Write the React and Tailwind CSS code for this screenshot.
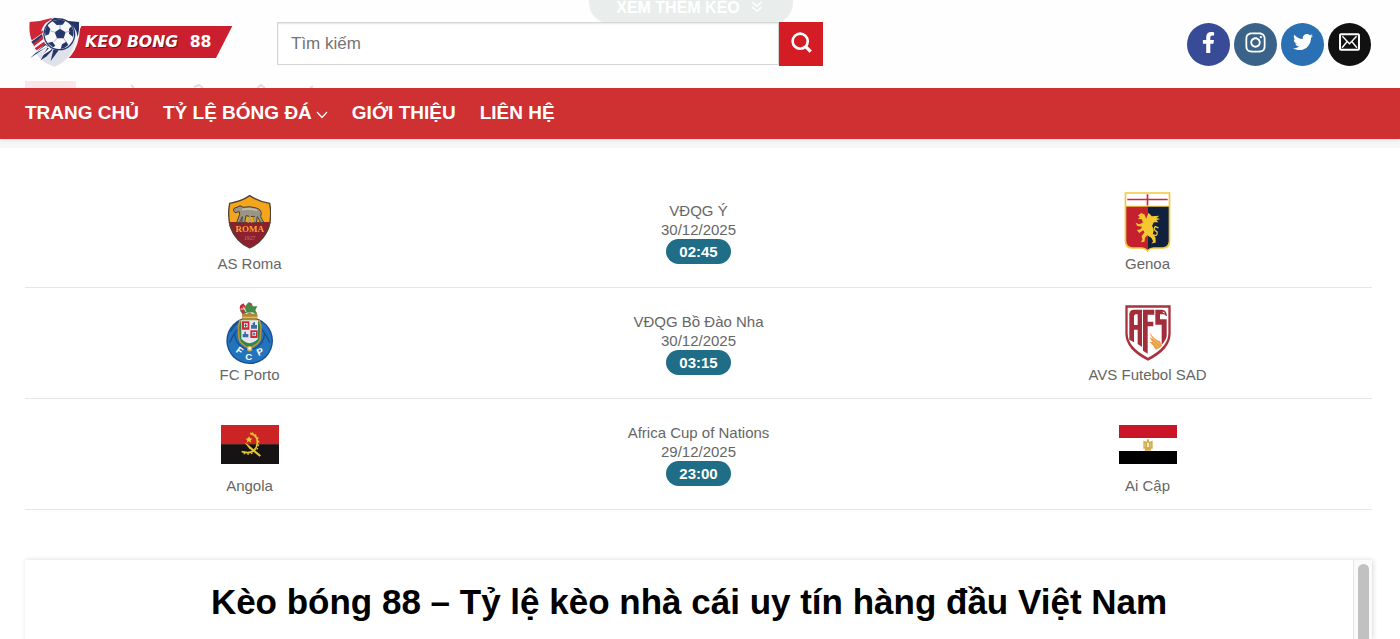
import React, { useState } from 'react';
import { FaFacebookF, FaInstagram, FaTwitter } from 'react-icons/fa';

const Logo = () => (
  <svg viewBox="84 54 615 150" className="w-[205px] h-[50px]" role="img" aria-label="KEO BONG 88">
    <path d="M244 81 H697 L648 177 H204 Z" fill="#cb1f30" />
    <path d="M88 68 Q125 66 160 54 Q196 66 238 68 Q245 112 223 155 Q204 188 163 203 Q120 188 104 158 Q84 116 88 68Z" fill="#f4f5f8" />
    <path d="M89 69 Q124 67 158 56 L150 64 Q126 76 124 100 L94 122 Q86 96 89 69Z" fill="#d02535" />
    <path d="M164 56 Q200 67 237 69 Q239 92 233 114 Q230 84 204 70 Q184 62 150 64Z" fill="#233466" />
    <path d="M163 203 Q122 190 108 163 L160 148 Q200 156 226 124 Q214 184 163 203Z" fill="#dfe2e8" />
    <path d="M94 116 L130 94 L128 102 L96 124Z M98 132 L128 112 L130 120 L102 142Z M104 148 L132 128 L136 136 L110 154Z" fill="#d02535" />
    <path d="M94 128 L126 105 L128 112 L98 134Z M90 178 L136 134 L144 142 L116 160Z M122 184 L142 146 L158 152 L140 172Z M152 186 L160 152 L176 154Z" fill="#26376b" />
    <path d="M102 164 L138 138 L142 143Z M124 172 L148 146 L154 152Z" fill="#fff" />
    <circle cx="178" cy="106" r="48" fill="#26376b" />
    <circle cx="178" cy="106" r="44" fill="#f8f9fb" />
    <path d="M164 100 L180 89 L197 100 L191 118 L171 118Z" fill="#26376b" />
    <path d="M158 67 Q176 58 196 66 L188 77 L170 78Z M214 82 Q224 98 219 114 L207 104 L207 90Z M205 138 Q195 148 182 150 L186 136 L199 128Z M143 132 L157 128 L166 140 L159 145Z M135 96 L142 78 L151 90 L147 106 L136 110Z" fill="#26376b" />
    <path d="M180 91 V78 M195 100 L209 97 M190 117 L199 129 M172 117 L161 129 M166 100 L151 96" stroke="#a9b2cb" strokeWidth="3" />
    <text x="259" y="147" fill="#7d0d1a" fontFamily="DejaVu Sans, sans-serif" fontSize="47" fontWeight="700" fontStyle="italic">KEO BONG</text>
    <text x="256" y="144" fill="#fff" fontFamily="DejaVu Sans, sans-serif" fontSize="47" fontWeight="700" fontStyle="italic">KEO BONG</text>
    <text x="569" y="145" fill="#fff" fontFamily="DejaVu Sans, sans-serif" fontSize="47" fontWeight="700">88</text>
  </svg>
);

const RomaCrest = () => (
  <svg viewBox="114 48 129 162" className="w-[43px] h-[54px]" aria-hidden="true">
    <path d="M179 50 Q155 67 119 73 Q112 110 121 142 Q137 189 179 207 Q221 189 237 142 Q246 110 239 73 Q203 67 179 50Z" fill="#f5a51c" />
    <path d="M116 129 H242 Q234 180 179 207 Q124 180 116 129Z" fill="#8e1f2f" />
    <path d="M130 93 Q130 86 141 85 L150 80 L159 85 Q178 80 199 87 Q211 89 214 101 L212 113 Q216 121 221 130 L212 131 L202 113 L199 131 H191 L193 112 Q179 114 168 110 L164 131 H155 L157 113 L148 131 H140 L149 106 L148 98 L135 101Z" fill="#9a9584" stroke="#45413a" strokeWidth="3" />
    <path d="M156 92 Q178 86 201 94" stroke="#c4bfae" strokeWidth="5" fill="none" />
    <path d="M174 131 L180 113 L185 131 M190 130 L195 115" stroke="#b6a45f" strokeWidth="5" fill="none" />
    <text x="179" y="160" textAnchor="middle" fill="#f3a72c" fontFamily="Liberation Serif, serif" fontSize="27" fontWeight="700">ROMA</text>
    <text x="179" y="183" textAnchor="middle" fill="#c7796e" fontFamily="Liberation Serif, serif" fontSize="17">1927</text>
    <path d="M179 50 Q155 67 119 73 Q112 110 121 142 Q137 189 179 207 Q221 189 237 142 Q246 110 239 73 Q203 67 179 50Z" fill="none" stroke="#514334" strokeWidth="4" />
  </svg>
);

const GenoaCrest = () => (
  <svg viewBox="132 34 142 184" className="w-[47px] h-[62px]" aria-hidden="true">
    <path d="M134 36 H272 V184 Q272 205 251 207 H222 Q208 208 203 217 Q198 208 184 207 H156 Q134 205 134 184Z" fill="#f2c83a" />
    <path d="M139 41 H267 V77 H139Z" fill="#fff" />
    <path d="M139 80 H203 V210 Q197 202 184 202 H157 Q139 200 139 183Z" fill="#c4202e" />
    <path d="M203 80 H267 V183 Q267 200 250 202 H222 Q210 202 203 210Z" fill="#11213d" />
    <path d="M142 58 H264 M203 42 V76" stroke="#cf2735" strokeWidth="5" />
    <path d="M174 106 L184 99 L194 103 L199 116 L206 98 L216 109 L239 107 L230 114 L241 117 L230 121 L236 127 L222 127 L217 137 L222 151 L219 163 L227 172 L228 188 L215 191 L220 184 L215 174 L202 166 L195 174 L194 186 L183 187 L188 179 L185 169 L194 157 L190 151 L178 159 L171 150 L181 149 L187 140 L172 138 L167 128 L178 133 L189 128 L186 118 L174 117 L180 111Z" fill="#f4c92f" />
    <path d="M218 164 Q235 172 232 156 Q218 148 226 140 L236 144" stroke="#f4c92f" strokeWidth="4" fill="none" />
  </svg>
);

const PortoCrest = () => (
  <svg viewBox="108 36 141 186" className="w-[47px] h-[62px]" aria-hidden="true">
    <circle cx="179" cy="152" r="70" fill="#154e92" />
    <circle cx="179" cy="152" r="66" fill="#2374bd" />
    <path d="M121 125 Q142 88 165 92 M119 158 Q132 128 145 116 M239 158 Q226 128 213 116 M134 128 Q136 170 179 181 Q222 170 224 128" stroke="#174f91" strokeWidth="4" fill="none" />
    <path d="M150 92 L145 110 L147 145 Q151 164 178 174 Q207 164 211 145 L213 108 L208 92Z" fill="#31844d" stroke="#b6943b" strokeWidth="5" />
    <path d="M154 91 H204 V146 Q195 156 179 160 Q162 156 154 146Z" fill="#e2e8ee" />
    <path d="M156 94 H178 V119 H156Z M181 121 H203 V144 H181Z" fill="#cf2938" />
    <path d="M162 100 H173 V112 H162Z M187 126 H198 V137 H187Z" fill="#fff" />
    <path d="M167 101 V111 M163 106 H172 M192 127 V136 M188 132 H197" stroke="#28569a" strokeWidth="3" />
    <path d="M183 116 V105 H188 V99 H191 V96 H195 V105 H201 V116Z M158 142 V132 H163 V125 H168 V132 H175 V142Z" fill="#426aa2" />
    <path d="M156 73 L160 67 L170 72 L179 65 L188 72 L199 67 L203 75 L200 90 H157Z" fill="#ad8836" />
    <path d="M158 82 H202" stroke="#e1ba62" strokeWidth="4" />
    <path d="M150 62 L153 43 L164 51 L175 37 L184 39 L189 49 L202 49 L196 61 L201 70 L180 66 L157 72Z" fill="#458b48" />
    <path d="M150 47 L160 40 L166 48 L158 59 L149 56Z M154 61 L163 59 L165 67 L157 71Z M181 38 L185 43 L180 46Z" fill="#c62d3a" />
    <path d="M152 57 H166 M160 50 L168 66" stroke="#f0dddd" strokeWidth="3" />
    <circle cx="179" cy="176" r="8" fill="#d3b34b" />
    <circle cx="179" cy="175" r="4" fill="#fff" />
    <g fill="#fff" fontFamily="Liberation Sans, sans-serif" fontWeight="700" fontSize="29" textAnchor="middle">
      <text transform="translate(143 190) rotate(36)">F</text>
      <text x="176" y="211">C</text>
      <text transform="translate(214 194) rotate(-24)">P</text>
    </g>
  </svg>
);

const AvsCrest = () => (
  <svg viewBox="134 44 138 168" className="w-[46px] h-[56px]" aria-hidden="true">
    <path d="M135 45 H271 V130 Q270 178 203 211 Q136 178 135 130Z" fill="#a8323e" />
    <path d="M142 52 H264 V129 Q264 171 203 202 Q142 171 142 129Z" fill="#fff" />
    <path d="M147 148 V72 Q147 58 161 58 H185 V170 L172 161 V118 H161 V156Z M161 76 V104 H172 V72 H165Z" fill="#a32d3a" fillRule="evenodd" />
    <path d="M188 58 H222 V73 H202 V94 H219 V108 H202 V190 L188 181Z" fill="#a32d3a" />
    <path d="M225 58 H245 Q259 59 260 77 L254 75 L252 72 H239 V87 H259 V137 Q257 151 244 163 V103 H225Z" fill="#a32d3a" />
    <path d="M247 65 L253 68" stroke="#fff" strokeWidth="3" />
    <path d="M209 126 Q217 145 239 153 L245 166 Q237 176 226 178 Q220 166 208 155 L217 155 Q208 147 208 141 L217 146 Q208 135 209 126Z" fill="#eaa04b" />
    <path d="M215 142 L238 162 M216 153 L235 170" stroke="#fff0d5" strokeWidth="1" />
  </svg>
);

const AngolaFlag = () => (
  <svg viewBox="92 71 174 117" className="w-[58px] h-[39px]" aria-hidden="true">
    <path d="M92 71 H266 V130 H92Z" fill="#cc2424" />
    <path d="M92 129 H266 V188 H92Z" fill="#151313" />
    <path d="M179 96 Q202 101 201 125 Q198 153 171 154 L154 151" stroke="#e9c72e" strokeWidth="5" fill="none" />
    <path d="M184 95 Q207 103 205 127 Q202 156 173 158 L156 156" stroke="#e9c72e" strokeWidth="4" strokeDasharray="5 6" fill="none" />
    <path d="M163 124 L171 128 L212 162 L208 166 L176 141Z" fill="#e9c72e" />
    <path d="M176 105 L179 111 L186 112 L181 117 L182 124 L176 120 L169 124 L171 117 L166 112 L173 111Z" fill="#e9c72e" />
  </svg>
);

const EgyptFlag = () => (
  <svg viewBox="117 71 174 117" className="w-[58px] h-[39px]" aria-hidden="true">
    <path d="M117 71 H291 V110 H117Z" fill="#c91527" />
    <path d="M117 110 H291 V150 H117Z" fill="#fff" />
    <path d="M117 149 H291 V188 H117Z" fill="#000" />
    <path d="M201 114 L206 114 L208 121 L218 118 V142 L212 142 L214 148 H193 L196 142 L190 142 V118 L200 121Z" fill="#d4ad4b" />
    <path d="M201 124 H207 V137 H201Z" fill="#f4e9c9" />
    <path d="M195 126 V137 M212 126 V137" stroke="#ecd79a" strokeWidth="2" />
  </svg>
);

const MailIcon = () => (
  <svg viewBox="0 0 62 52" width="21" height="18" fill="none" stroke="currentColor" strokeWidth="6" aria-hidden="true">
    <rect x="3" y="3" width="56" height="46" rx="3" />
    <path d="M10 9 L31 31 L52 9 M9 43 L23 26 M53 43 L39 26" strokeWidth="4" />
  </svg>
);

const matches = [
  { id: 1, home: 'AS Roma', HomeLogo: RomaCrest, away: 'Genoa', AwayLogo: GenoaCrest, league: 'VĐQG Ý', date: '30/12/2025', time: '02:45' },
  { id: 2, home: 'FC Porto', HomeLogo: PortoCrest, away: 'AVS Futebol SAD', AwayLogo: AvsCrest, league: 'VĐQG Bồ Đào Nha', date: '30/12/2025', time: '03:15' },
  { id: 3, home: 'Angola', HomeLogo: AngolaFlag, away: 'Ai Cập', AwayLogo: EgyptFlag, league: 'Africa Cup of Nations', date: '29/12/2025', time: '23:00' }
];

const socials = [
  { label: 'Facebook', bg: 'bg-[#374b96]', icon: <FaFacebookF size={21} /> },
  { label: 'Instagram', bg: 'bg-[#3b6289]', icon: <FaInstagram size={23} /> },
  { label: 'Twitter', bg: 'bg-[#2b70b3]', icon: <FaTwitter size={20} /> },
  { label: 'Email', bg: 'bg-[#111111]', icon: <MailIcon /> }
];

const navItems = [
  { label: 'TRANG CHỦ' },
  { label: 'TỶ LỆ BÓNG ĐÁ', hasMenu: true },
  { label: 'GIỚI THIỆU' },
  { label: 'LIÊN HỆ' }
];

const Team = ({ name, logo: TeamLogo }) => (
  <div className="flex flex-col items-center">
    <div className="h-16 flex items-center"><TeamLogo /></div>
    <span className="leading-5">{name}</span>
  </div>
);

const App = () => {
  const [query, setQuery] = useState('');

  return (
    <div className="h-screen flex flex-col overflow-hidden bg-white text-[#666666] font-['Liberation_Sans',Arial,sans-serif]">
      <header className="shrink-0 border-b-[9px] border-[#f7f7f7]">
        <div className="relative h-[88px] pl-7 pr-[29px] flex items-center bg-[#fefefe]">
          {/* Page content showing through the sticky header */}
          <div className="absolute inset-x-0 top-0 flex justify-center pr-[18px]">
            <a href="#more" className="h-[23px] px-[27px] flex items-start gap-2 rounded-b-[20px] bg-[#e9eeed] text-white text-base leading-4 font-bold">
              XEM THÊM KÈO
              <svg viewBox="0 0 18 12" className="w-[18px] h-3 mt-px" fill="none" stroke="currentColor" strokeWidth="1.5" aria-hidden="true">
                <path d="M4 1 L9 5 L14 1 M4 6 L9 10 L14 6" />
              </svg>
            </a>
          </div>
          <div className="absolute bottom-0 left-[25px] w-[51px] h-[7px] bg-[#fae6e8]" />
          <svg className="absolute bottom-0 left-[120px] w-[200px] h-1" viewBox="0 0 200 4" fill="none" stroke="#dedede" strokeWidth="2" aria-hidden="true">
            <path d="M11 1 L14 4 M74 3 L79 1 L83 4 M137 4 L141 1 L145 4 M190 4 L193 2" />
          </svg>

          <a href="#home" className="relative shrink-0 -mt-1"><Logo /></a>
          <form className="relative flex ml-11 w-[546px]" onSubmit={(e) => e.preventDefault()}>
            <input
              type="text"
              aria-label="Tìm kiếm"
              value={query}
              onChange={(e) => setQuery(e.target.value)}
              placeholder="Tìm kiếm"
              className="flex-1 min-w-0 h-[43px] px-[13px] border border-[#d5d5d5] bg-white text-[17px] text-[#333333] placeholder:text-[#747474] shadow-[inset_0_1px_2px_rgba(0,0,0,0.1)] outline-none"
            />
            <button type="submit" aria-label="Tìm kiếm" className="w-11 h-11 flex items-center justify-center bg-[#d41c25] text-white">
              <svg viewBox="0 0 64 64" className="w-[21px] h-[21px] -mt-1" fill="none" stroke="currentColor" strokeWidth="8" aria-hidden="true">
                <circle cx="28" cy="28" r="23" />
                <path d="M44 44 L60 60" strokeWidth="10" />
              </svg>
            </button>
          </form>
          <div className="relative ml-auto flex gap-1 text-white">
            {socials.map((s) => (
              <a key={s.label} href="#social" aria-label={s.label} className={`size-[43px] pb-1 rounded-full flex items-center justify-center ${s.bg}`}>
                {s.icon}
              </a>
            ))}
          </div>
        </div>

        <nav className="h-[51px] px-[25px] flex items-center gap-6 bg-[#cf3032] text-white text-[19px] font-bold shadow-[0_1px_4px_rgba(0,0,0,0.1)]">
          {navItems.map((item) => (
            <a key={item.label} href="#nav" className="flex items-center gap-1 whitespace-nowrap">
              {item.label}
              {item.hasMenu && (
                <svg viewBox="0 0 12 8" className="w-3 h-2 mt-0.5" fill="none" stroke="currentColor" strokeWidth="1.3" aria-hidden="true">
                  <path d="M1 1 L6 6.5 L11 1" />
                </svg>
              )}
            </a>
          ))}
        </nav>
      </header>

      <main className="flex-1 min-h-0 flex flex-col pl-[25px] pr-7 pt-[29px]">
        <ul className="shrink-0 text-[15px]">
          {matches.map((m) => (
            <li key={m.id} className="grid grid-cols-3 items-center py-[13px] border-b border-[#e7e7e7]">
              <Team name={m.home} logo={m.HomeLogo} />
              <div className="flex flex-col items-center leading-[19px]">
                <span>{m.league}</span>
                <span>{m.date}</span>
                <span className="px-[13px] rounded-full bg-[#1f6d86] text-white font-bold leading-[25px]">{m.time}</span>
              </div>
              <Team name={m.away} logo={m.AwayLogo} />
            </li>
          ))}
        </ul>

        <section className="flex-1 mt-[50px] flex bg-white shadow-[1px_0_5px_rgba(0,0,0,0.15)]">
          <h1 className="flex-1 pt-5 text-center text-[35px] leading-[44px] font-bold text-black">
            Kèo bóng 88 – Tỷ lệ kèo nhà cái uy tín hàng đầu Việt Nam
          </h1>
          <div className="w-[19px] pt-1 pl-1 border-l border-[#e5e5e5] bg-[#fafafa]">
            <div className="w-[11px] h-full rounded-t-full bg-[#c1c1c1]" />
          </div>
        </section>
      </main>
    </div>
  );
};

export default App;
